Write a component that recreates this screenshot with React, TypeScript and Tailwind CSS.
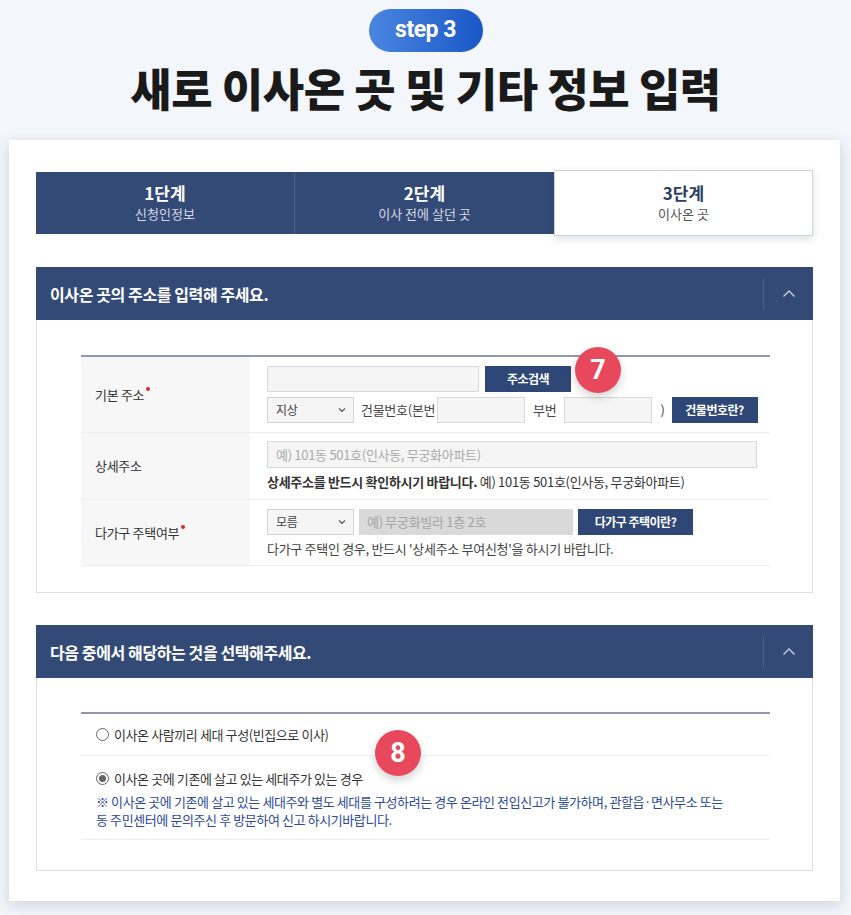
import React from "react";

function Chevron({ className }: { className?: string }) {
  return (
    <svg width="8" height="6" viewBox="0 0 8 6" fill="none" stroke="currentColor" strokeWidth="1.2" className={className}>
      <polyline points="1,1.5 4,4.5 7,1.5" />
    </svg>
  );
}

function Select({ value, className }: { value: string; className?: string }) {
  return (
    <div className={"flex h-[26px] w-[87px] items-center justify-between border border-[#d4d4d4] bg-[#f5f5f5] pl-[8px] pr-[7px] text-[12px] text-[#444] " + (className ?? "")}>
      <span>{value}</span>
      <Chevron className="text-[#555]" />
    </div>
  );
}

function NavyButton({ children, className }: { children: React.ReactNode; className?: string }) {
  return (
    <button className={"flex h-[26px] items-center justify-center bg-[#2f4776] text-[12px] font-bold tracking-[-0.5px] text-white " + (className ?? "")}>
      {children}
    </button>
  );
}

function SectionHeader({ title }: { title: string }) {
  return (
    <div className="flex h-[53px] items-center bg-[#344a76]">
      <h3 className="flex-1 pl-[14px] text-[16px] font-bold tracking-[-0.4px] text-white">{title}</h3>
      <div className="h-[32px] w-px bg-[#4d618a]" />
      <div className="flex w-[49px] items-center justify-center text-[#c9d0dd]">
        <svg width="14" height="9" viewBox="0 0 14 9" fill="none" stroke="currentColor" strokeWidth="1.4">
          <polyline points="1.5,7.5 7,2 12.5,7.5" />
        </svg>
      </div>
    </div>
  );
}

function Badge({ n, className }: { n: string; className?: string }) {
  return (
    <div className={"absolute flex h-[46px] w-[46px] items-center justify-center rounded-full bg-[#e8485c] font-['Roboto',sans-serif] text-[27px] font-bold text-white shadow-[0_4px_10px_rgba(0,0,0,0.18)] " + (className ?? "")}>
      {n}
    </div>
  );
}

function Star() {
  return <span className="relative -top-[6px] ml-[2px] inline-block h-[4px] w-[4px] rounded-full bg-[#e1252f]" />;
}

function Radio({ checked }: { checked?: boolean }) {
  return (
    <span className="flex h-[13px] w-[13px] items-center justify-center rounded-full border border-[#666] bg-white">
      {checked && <span className="h-[7px] w-[7px] rounded-full bg-[#666]" />}
    </span>
  );
}

export default function App() {
  return (
    <div className="min-h-[915px] w-[851px] overflow-hidden bg-[#f3f6fb] font-['Noto_Sans_CJK_KR','Noto_Sans',sans-serif] text-[#333]">
      <div className="flex flex-col items-center pt-[9px]">
        <div className="flex h-[43px] w-[114px] items-center justify-center rounded-full bg-gradient-to-r from-[#4a86e0] to-[#1957c6] font-['Roboto',sans-serif] text-[23px] font-bold tracking-[-0.5px] text-white">
          step 3
        </div>
        <h1 className="mt-[8px] text-[45px] font-black leading-[56px] tracking-[-0.5px] text-[#1a1a1a]">
          새로 이사온 곳 및 기타 정보 입력
        </h1>
      </div>

      <div className="mx-[9px] mt-[24px] w-[831px] bg-white px-[27px] pb-[30px] pt-[32px] shadow-[0_4px_14px_rgba(40,50,70,0.18)]">
        <div className="grid h-[62px] grid-cols-3 bg-[#344a76]">
          <div className="flex flex-col items-center justify-center border-r border-[#4d618a]">
            <span className="text-[17px] font-bold leading-[22px] text-white">1단계</span>
            <span className="text-[13px] leading-[20px] text-[#d3d9e5]">신청인정보</span>
          </div>
          <div className="flex flex-col items-center justify-center">
            <span className="text-[17px] font-bold leading-[22px] text-white">2단계</span>
            <span className="text-[13px] leading-[20px] text-[#d3d9e5]">이사 전에 살던 곳</span>
          </div>
          <div className="relative -my-[2px] flex flex-col items-center justify-center border border-[#cdd3dd] bg-white shadow-[0_3px_8px_rgba(40,50,70,0.15)]">
            <span className="text-[17px] font-bold leading-[22px] text-[#2c3c63]">3단계</span>
            <span className="text-[13px] leading-[20px] text-[#555]">이사온 곳</span>
          </div>
        </div>

        <section className="relative mt-[33px]">
          <SectionHeader title="이사온 곳의 주소를 입력해 주세요." />
          <div className="border border-t-0 border-[#dedede] pb-[26px] pl-[44px] pr-[42px] pt-[35px]">
            <div className="border-t-[2px] border-[#8e99ae] text-[13px] tracking-[-0.3px]">
              <div className="flex border-b border-[#eeeeee]">
                <div className="flex w-[169px] items-center bg-[#f7f7f7] pl-[14px] text-[13px] text-[#333]">
                  기본 주소<Star />
                </div>
                <div className="flex flex-col gap-[5px] py-[9px] pl-[17px]">
                  <div className="flex gap-[6px]">
                    <div className="h-[26px] w-[212px] border border-[#d8d8d8] bg-[#f5f5f5]" />
                    <NavyButton className="w-[86px]">주소검색</NavyButton>
                  </div>
                  <div className="flex items-center text-[#444]">
                    <Select value="지상" />
                    <span className="ml-[7px] mr-[2px]">건물번호(본번</span>
                    <div className="h-[26px] w-[88px] border border-[#d8d8d8] bg-[#f5f5f5]" />
                    <span className="ml-[8px] mr-[8px]">부번</span>
                    <div className="h-[26px] w-[88px] border border-[#d8d8d8] bg-[#f5f5f5]" />
                    <span className="ml-[8px] mr-[7px]">)</span>
                    <NavyButton className="w-[86px]">건물번호란?</NavyButton>
                  </div>
                </div>
              </div>

              <div className="flex border-b border-[#eeeeee]">
                <div className="flex w-[169px] items-center bg-[#f7f7f7] pl-[14px] text-[13px] text-[#333]">상세주소</div>
                <div className="flex flex-col pb-[9px] pl-[17px] pt-[8px]">
                  <div className="flex h-[27px] w-[490px] items-center border border-[#d8d8d8] bg-[#f5f5f5] pl-[8px] text-[#aaa]">
                    예) 101동 501호(인사동, 무궁화아파트)
                  </div>
                  <p className="mt-[6px] font-bold leading-[16px] text-[#333]">
                    상세주소를 반드시 확인하시기 바랍니다. <span className="font-normal">예) 101동 501호(인사동, 무궁화아파트)</span>
                  </p>
                </div>
              </div>

              <div className="flex border-b border-[#eeeeee]">
                <div className="flex w-[169px] items-center bg-[#f7f7f7] pl-[14px] text-[13px] text-[#333]">
                  다가구 주택여부<Star />
                </div>
                <div className="flex flex-col pb-[8px] pl-[17px] pt-[9px]">
                  <div className="flex gap-[5px]">
                    <Select value="모름" />
                    <div className="flex h-[26px] w-[214px] items-center bg-[#d9d9d9] pl-[8px] text-[#a5a5a5]">
                      예) 무궁화빌라 1층 2호
                    </div>
                    <NavyButton className="w-[115px]">다가구 주택이란?</NavyButton>
                  </div>
                  <p className="mt-[6px] leading-[16px] text-[#444]">
                    다가구 주택인 경우, 반드시 '상세주소 부여신청'을 하시기 바랍니다.
                  </p>
                </div>
              </div>
            </div>
          </div>
          <Badge n="7" className="left-[539px] top-[80px]" />
        </section>

        <section className="relative mt-[32px]">
          <SectionHeader title="다음 중에서 해당하는 것을 선택해주세요." />
          <div className="border border-t-0 border-[#dedede] pb-[30px] pl-[44px] pr-[42px] pt-[34px]">
            <div className="border-t-[2px] border-[#8e99ae] text-[13px] tracking-[-0.4px]">
              <div className="flex h-[42px] items-center gap-[5px] border-b border-[#eeeeee] pl-[15px] text-[#333]">
                <Radio />
                <span>이사온 사람끼리 세대 구성(빈집으로 이사)</span>
              </div>
              <div className="border-b border-[#eeeeee] pb-[10px] pl-[15px] pt-[13px]">
                <div className="flex items-center gap-[5px] text-[#333]">
                  <Radio checked />
                  <span>이사온 곳에 기존에 살고 있는 세대주가 있는 경우</span>
                </div>
                <p className="mt-[4px] leading-[18px] text-[#2c4a98]">
                  ※ 이사온 곳에 기존에 살고 있는 세대주와 별도 세대를 구성하려는 경우 온라인 전입신고가 불가하며, 관할읍·면사무소 또는
                  <br />
                  동 주민센터에 문의주신 후 방문하여 신고 하시기바랍니다.
                </p>
              </div>
            </div>
          </div>
          <Badge n="8" className="left-[339px] top-[105px]" />
        </section>
      </div>
    </div>
  );
}
